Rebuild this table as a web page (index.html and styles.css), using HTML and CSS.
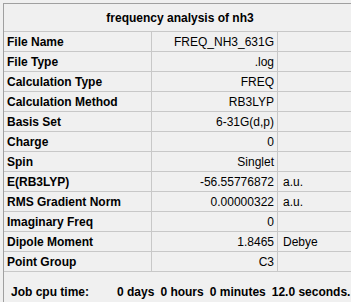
FILE: index.html
```html
<!DOCTYPE html>
<html lang="en">

<head>
  <meta charset="UTF-8">
  <title>frequency analysis of nh3</title>
  <link rel="stylesheet" href="styles.css">
</head>

<body>
  <div class="panel">
    <div class="summary">
      <div class="title">frequency analysis of nh3</div>

      <div class="label">File Name</div>
      <div class="value">FREQ_NH3_631G</div>
      <div class="unit"></div>

      <div class="label">File Type</div>
      <div class="value">.log</div>
      <div class="unit"></div>

      <div class="label">Calculation Type</div>
      <div class="value">FREQ</div>
      <div class="unit"></div>

      <div class="label">Calculation Method</div>
      <div class="value">RB3LYP</div>
      <div class="unit"></div>

      <div class="label">Basis Set</div>
      <div class="value">6-31G(d,p)</div>
      <div class="unit"></div>

      <div class="label">Charge</div>
      <div class="value">0</div>
      <div class="unit"></div>

      <div class="label">Spin</div>
      <div class="value">Singlet</div>
      <div class="unit"></div>

      <div class="label">E(RB3LYP)</div>
      <div class="value">-56.55776872</div>
      <div class="unit">a.u.</div>

      <div class="label">RMS Gradient Norm</div>
      <div class="value">0.00000322</div>
      <div class="unit">a.u.</div>

      <div class="label">Imaginary Freq</div>
      <div class="value">0</div>
      <div class="unit"></div>

      <div class="label">Dipole Moment</div>
      <div class="value">1.8465</div>
      <div class="unit">Debye</div>

      <div class="label">Point Group</div>
      <div class="value">C3</div>
      <div class="unit"></div>
    </div>

    <div class="cpu-time">
      <span class="cpu-label">Job cpu time:</span>
      <span>0 days</span>
      <span>0 hours</span>
      <span>0 minutes</span>
      <span>12.0 seconds.</span>
    </div>
  </div>
</body>

</html>
```

FILE: styles.css
```css
body {
  margin: 0;
  overflow: hidden;
  background-color: #f0f0f0;
  font-family: "Liberation Sans", Arial, sans-serif;
  font-size: 12px;
  color: #000;
}

.panel {
  margin: 3px 0 0 3px;
  width: 347px;
  height: 298px;
  border-top: 1px solid #a0a0a0;
  border-left: 1px solid #a0a0a0;
}

/* grid lines come from the gap showing the grid background */
.summary {
  display: grid;
  grid-template-columns: 147px 125px 1fr;
  grid-template-rows: 27px;
  grid-auto-rows: 19px;
  gap: 1px;
  margin-right: -5px;
  background-color: #c8c8c8;
  border-bottom: 1px solid #c8c8c8;
}

.summary > div {
  background-color: #f0f0f0;
  display: flex;
  align-items: center;
  white-space: nowrap;
}

.title {
  grid-column: 1 / 4;
  justify-content: center;
  font-weight: bold;
}

.label {
  padding-left: 3px;
  font-weight: bold;
}

.value {
  justify-content: flex-end;
  padding-right: 3px;
}

.unit {
  padding-left: 5px;
}

.cpu-time {
  display: flex;
  gap: 6px;
  padding: 13px 0 0 7px;
  font-weight: bold;
  white-space: nowrap;
}

.cpu-label {
  margin-right: 22px;
}
```
